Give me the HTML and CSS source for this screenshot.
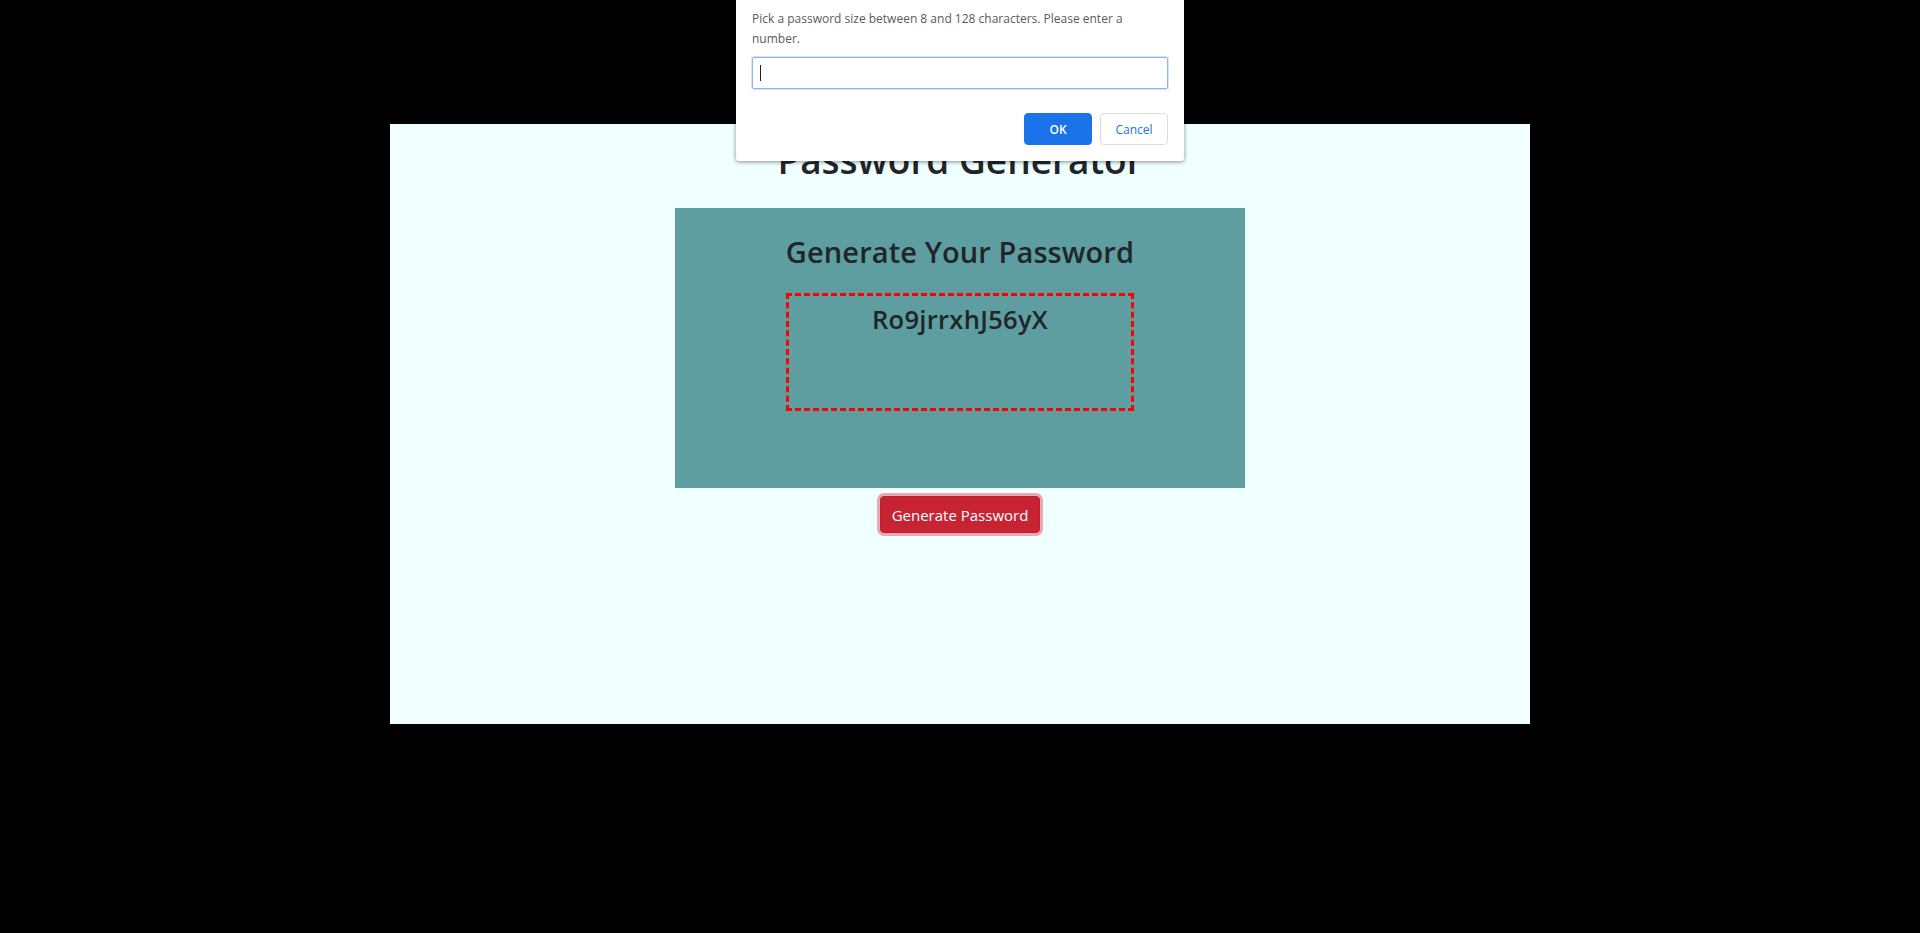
FILE: index.html
```html
<!DOCTYPE html>
<html lang="en">
<head>
<meta charset="utf-8">
<title>Password Generator</title>
<link rel="stylesheet" href="styles.css">
</head>
<body>
<div class="wrapper">
  <h1 class="title">Password Generator</h1>
  <div class="card">
    <h2 class="card-title">Generate Your Password</h2>
    <div class="password-box">
      <h3 class="password">Ro9jrrxhJ56yX</h3>
    </div>
  </div>
  <button class="btn-generate" type="button">Generate Password</button>
</div>

<div class="prompt">
  <p class="prompt-msg">Pick a password size between 8 and 128 characters. Please enter a<br>number.</p>
  <div class="prompt-input"><span class="caret"></span></div>
  <div class="prompt-actions">
    <button class="btn-ok" type="button">OK</button>
    <button class="btn-cancel" type="button">Cancel</button>
  </div>
</div>
</body>
</html>
```

FILE: styles.css
```css
* { box-sizing: border-box; }

html, body {
  margin: 0;
  padding: 0;
  background: #000;
  height: 100%;
}

body {
  font-family: "Open Sans", "Noto Sans", Arial, sans-serif;
  color: #212529;
}

.wrapper {
  width: 1140px;
  height: 600px;
  margin: 124px auto 0;
  padding-top: 12px;
  background: #f0ffff;
  display: flex;
  flex-direction: column;
  align-items: center;
}

.title {
  margin: 0 0 24px;
  font-size: 37px;
  line-height: 48px;
  font-weight: 600;
}

.card {
  width: 570px;
  height: 280px;
  background: #5f9ea0;
  display: flex;
  flex-direction: column;
  align-items: center;
  padding-top: 24px;
}

.card-title {
  margin: 0 0 21px;
  font-size: 29px;
  line-height: 40px;
  font-weight: 600;
  letter-spacing: 0.1px;
}

.password-box {
  width: 348px;
  height: 118px;
  border: 3px dashed #ff0000;
  display: flex;
  justify-content: center;
  align-items: flex-start;
}

.password {
  margin: 0;
  padding-top: 6px;
  font-size: 25.5px;
  line-height: 34px;
  font-weight: 600;
  letter-spacing: 0.3px;
}

.btn-generate {
  margin-top: 8px;
  width: 160px;
  height: 37px;
  padding: 0;
  border: 1px solid #bd2130;
  border-radius: 4px;
  background: #c82333;
  color: #fff;
  font-family: inherit;
  font-size: 15px;
  box-shadow: 0 0 0 3px rgba(225, 83, 97, 0.5);
}

.prompt {
  position: absolute;
  top: 0;
  left: 736px;
  width: 448px;
  height: 161px;
  background: #fff;
  border-radius: 0 0 3px 3px;
  box-shadow: 0 1px 4px rgba(0, 0, 0, 0.45);
  padding: 9px 16px 0;
  font-family: "Open Sans", "Noto Sans", Arial, sans-serif;
}

.prompt-msg {
  margin: 0;
  font-size: 12px;
  line-height: 20px;
  color: #5a5a5a;
}

.prompt-input {
  margin-top: 8px;
  height: 32px;
  border: 1px solid #8ab4f8;
  border-radius: 2px;
  box-shadow: 0 0 0 1px rgba(138, 180, 248, 0.35);
  padding: 7px 7px;
}

.caret {
  display: block;
  width: 1px;
  height: 16px;
  background: #202124;
}

.prompt-actions {
  margin-top: 24px;
  display: flex;
  justify-content: flex-end;
  gap: 8px;
}

.btn-ok, .btn-cancel {
  width: 68px;
  height: 32px;
  border-radius: 4px;
  font-family: inherit;
  font-size: 12px;
  padding: 0;
}

.btn-ok {
  background: #1a73e8;
  border: 1px solid #1a73e8;
  color: #fff;
  font-weight: 600;
}

.btn-cancel {
  background: #fff;
  border: 1px solid #dadce0;
  color: #1a73e8;
  font-weight: 500;
}
```
